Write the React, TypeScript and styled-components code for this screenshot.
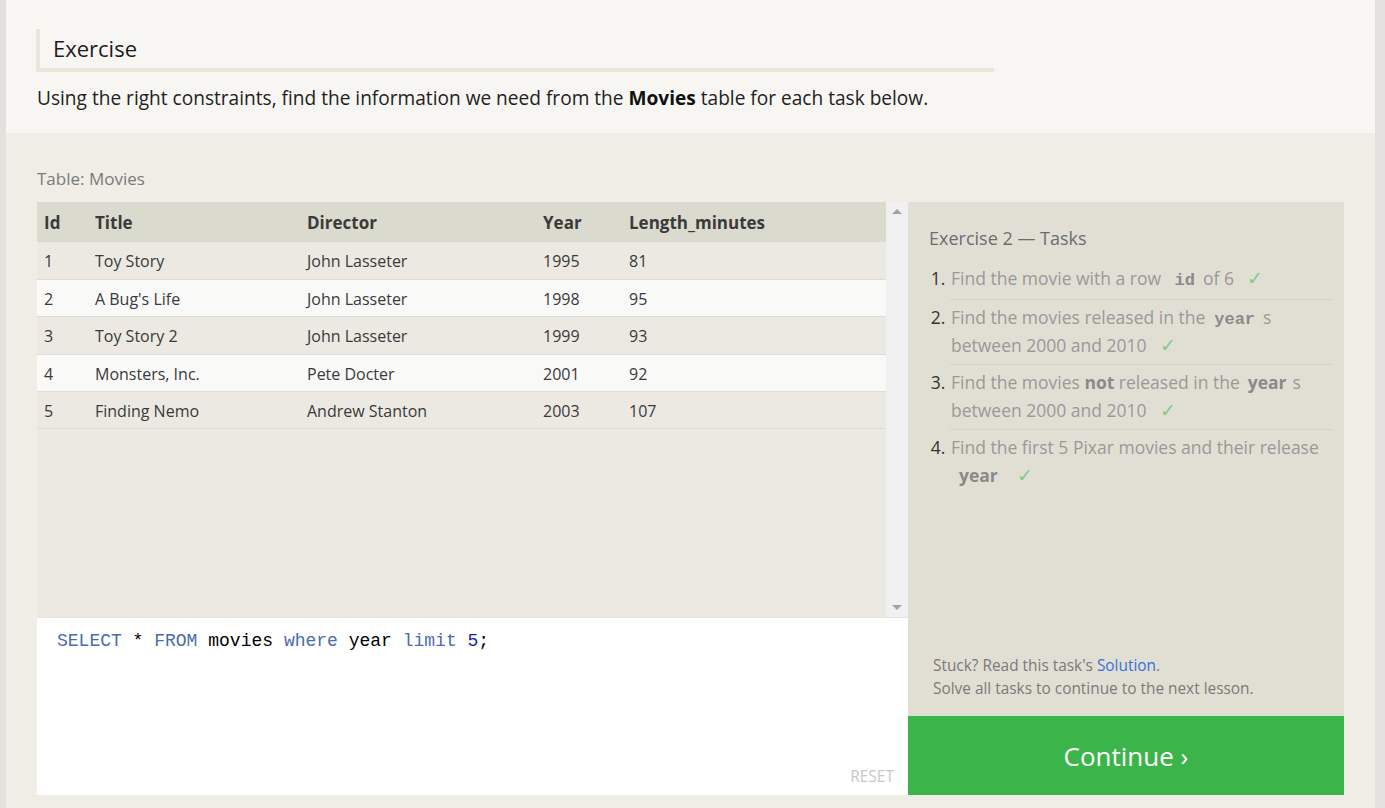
import React from 'react'
import styled, { createGlobalStyle } from 'styled-components'

const COLORS = {
  PAGE: '#e4e0dd',
  TOP: '#f7f6f2',
  LOWER: '#efede6',
  RULE: '#e8e7da',
  HEAD: '#dadace',
  ROW: '#ebe9e1',
  ROW_ALT: '#f9f9f8',
  PANEL: '#e1dfd4',
  GREEN: '#3bb54a',
}

const GlobalStyle = createGlobalStyle`
  html, body {
    margin: 0;
    padding: 0;
    background: ${COLORS.PAGE};
    font-family: "Open Sans", "Noto Sans", sans-serif;
    color: #222;
  }
  * { box-sizing: border-box; }
`

const Page = styled.div`
  margin: 0 10px 0 6px;
  height: 808px;
  overflow: hidden;
  display: flex;
  flex-direction: column;
`

const TopSection = styled.section`
  background: ${COLORS.TOP};
  padding: 29px 30px 0;
  height: 133px;
`

const Heading = styled.h1`
  margin: 0;
  width: 958px;
  height: 43px;
  padding: 4px 0 0 13px;
  border-left: 4px solid ${COLORS.RULE};
  border-bottom: 4px solid ${COLORS.RULE};
  font-size: 22px;
  font-weight: 400;
  color: #1c1c1c;
`

const Intro = styled.p`
  margin: 13px 0 0 1px;
  font-size: 19.1px;
  color: #222;

  strong { font-weight: 700; color: #111; }
`

const LowerSection = styled.section`
  flex: 1;
  background: ${COLORS.LOWER};
  padding: 34px 31px 0 31px;
`

const Caption = styled.div`
  font-size: 17px;
  color: #7a7a7a;
  margin-bottom: 12px;
  line-height: 23px;
`

const Workspace = styled.div`
  display: flex;
  height: 593px;
`

const LeftColumn = styled.div`
  width: 871px;
  display: flex;
  flex-direction: column;
`

const TableViewport = styled.div`
  height: 415px;
  display: flex;
  background: ${COLORS.ROW};
`

const TableScroll = styled.div`
  flex: 1;
`

const Table = styled.table`
  width: 100%;
  border-collapse: collapse;
  table-layout: fixed;
  font-size: 16px;
  color: #333;
`

const HeadCell = styled.th`
  text-align: left;
  font-weight: 700;
  height: 40px;
  padding: 0 0 0 7px;
  background: ${COLORS.HEAD};
  color: #3a3a3a;
  font-size: 17px;
`

const Row = styled.tr<{ alt: boolean }>`
  background: ${({ alt }) => (alt ? COLORS.ROW_ALT : COLORS.ROW)};
  border-bottom: 1px solid #dedcd4;
`

const Cell = styled.td`
  height: 37.4px;
  padding: 2px 0 0 7px;
  color: #3a3a3a;
`

const Scrollbar = styled.div`
  width: 22px;
  background: #f0f0f0;
  display: flex;
  flex-direction: column;
  justify-content: space-between;
  align-items: center;
  padding: 7px 0 7px;
`

const Arrow = styled.div<{ down?: boolean }>`
  width: 0;
  height: 0;
  border-left: 5px solid transparent;
  border-right: 5px solid transparent;
  ${({ down }) =>
    down ? 'border-top: 5px solid #a3a3a3;' : 'border-bottom: 5px solid #a3a3a3;'}
`

const Editor = styled.div`
  flex: 1;
  background: #fff;
  border-top: 1px solid #e6e4dc;
  position: relative;
  padding: 10px 20px;
  font-family: "Liberation Mono", "DejaVu Sans Mono", monospace;
  font-size: 18px;
  line-height: 26px;
  color: #000;
`

const Keyword = styled.span`
  color: #4d6bad;
`

const NumberToken = styled.span`
  color: #1a1aa6;
`

const ResetButton = styled.span`
  position: absolute;
  right: 14px;
  bottom: 9px;
  font-family: "Open Sans", sans-serif;
  font-size: 15.5px;
  color: #c8c8c8;
  line-height: 20px;
`

const RightColumn = styled.div`
  width: 436px;
  display: flex;
  flex-direction: column;
`

const TaskPanel = styled.div`
  flex: 1;
  background: ${COLORS.PANEL};
  padding: 24px 11px 16px 21px;
  display: flex;
  flex-direction: column;
`

const PanelTitle = styled.h2`
  margin: 0;
  font-size: 18px;
  font-weight: 400;
  color: #6a6e72;
  line-height: 24px;
`

const TaskList = styled.ol`
  margin: 11px 0 0;
  padding: 0 0 0 21px;
  font-size: 17.5px;
  line-height: 28px;
  color: #999;
`

const Task = styled.li<{ last?: boolean }>`
  padding: 3px 0 5px 1px;
  border-bottom: ${({ last }) => (last ? 'none' : '1px solid #d5d3c8')};

  &:first-child {
    padding-bottom: 7px;
  }

  &::marker {
    color: #333;
  }
`

const Code = styled.code`
  font-family: "Liberation Mono", "DejaVu Sans Mono", monospace;
  font-weight: 700;
  color: #8a8a8a;
  padding: 0 8px 0 9px;
  font-size: 17px;
  line-height: 1;
`

const Strong = styled.b`
  font-weight: 700;
  color: #8a8a8a;
  padding: 0 6px 0 8px;
  line-height: 1;
`

const Check = styled.span`
  color: #86c98a;
  margin-left: 13px;
  font-size: 19px;
  line-height: 1;
`

const HelpText = styled.div`
  margin-top: auto;
  padding-left: 4px;
  font-size: 15.4px;
  line-height: 23px;
  color: #7a7a7a;

  a { color: #3a6fd8; text-decoration: none; }
`

const ContinueButton = styled.button`
  height: 79px;
  border: none;
  background: ${COLORS.GREEN};
  color: #fff;
  font-family: "Open Sans", sans-serif;
  font-size: 26px;
  padding: 0;
`

const columns = [
  { name: 'Id', width: 51 },
  { name: 'Title', width: 212 },
  { name: 'Director', width: 236 },
  { name: 'Year', width: 86 },
  { name: 'Length_minutes', width: 264 },
]

const movies = [
  [1, 'Toy Story', 'John Lasseter', 1995, 81],
  [2, "A Bug's Life", 'John Lasseter', 1998, 95],
  [3, 'Toy Story 2', 'John Lasseter', 1999, 93],
  [4, 'Monsters, Inc.', 'Pete Docter', 2001, 92],
  [5, 'Finding Nemo', 'Andrew Stanton', 2003, 107],
]

const App = () => {
  return (
    <>
      <GlobalStyle />
      <Page>
        <TopSection>
          <Heading>Exercise</Heading>
          <Intro>
            Using the right constraints, find the information we need from the{' '}
            <strong>Movies</strong> table for each task below.
          </Intro>
        </TopSection>
        <LowerSection>
          <Caption>Table: Movies</Caption>
          <Workspace>
            <LeftColumn>
              <TableViewport>
                <TableScroll>
                  <Table>
                    <colgroup>
                      {columns.map((c) => (
                        <col key={c.name} style={{ width: c.width }} />
                      ))}
                    </colgroup>
                    <thead>
                      <tr>
                        {columns.map((c) => (
                          <HeadCell key={c.name}>{c.name}</HeadCell>
                        ))}
                      </tr>
                    </thead>
                    <tbody>
                      {movies.map((m, i) => (
                        <Row key={m[0]} alt={i % 2 === 1}>
                          {m.map((v, j) => (
                            <Cell key={j}>{v}</Cell>
                          ))}
                        </Row>
                      ))}
                    </tbody>
                  </Table>
                </TableScroll>
                <Scrollbar>
                  <Arrow />
                  <Arrow down />
                </Scrollbar>
              </TableViewport>
              <Editor>
                <Keyword>SELECT</Keyword> * <Keyword>FROM</Keyword> movies{' '}
                <Keyword>where</Keyword> year <Keyword>limit</Keyword>{' '}
                <NumberToken>5</NumberToken>;
                <ResetButton>RESET</ResetButton>
              </Editor>
            </LeftColumn>
            <RightColumn>
              <TaskPanel>
                <PanelTitle>Exercise 2 — Tasks</PanelTitle>
                <TaskList>
                  <Task>
                    Find the movie with a row <Code>id</Code>of 6<Check>✓</Check>
                  </Task>
                  <Task>
                    Find the movies released in the<Code>year</Code>s between 2000 and
                    2010<Check>✓</Check>
                  </Task>
                  <Task>
                    Find the movies <b style={{ color: '#8a8a8a' }}>not</b> released in the
                    <Strong>year</Strong>s between 2000 and 2010<Check>✓</Check>
                  </Task>
                  <Task last>
                    Find the first 5 Pixar movies and their release <Strong>year</Strong>
                    <Check>✓</Check>
                  </Task>
                </TaskList>
                <HelpText>
                  Stuck? Read this task's <a href="#">Solution</a>.
                  <br />
                  Solve all tasks to continue to the next lesson.
                </HelpText>
              </TaskPanel>
              <ContinueButton>Continue ›</ContinueButton>
            </RightColumn>
          </Workspace>
        </LowerSection>
      </Page>
    </>
  )
}

export default App
